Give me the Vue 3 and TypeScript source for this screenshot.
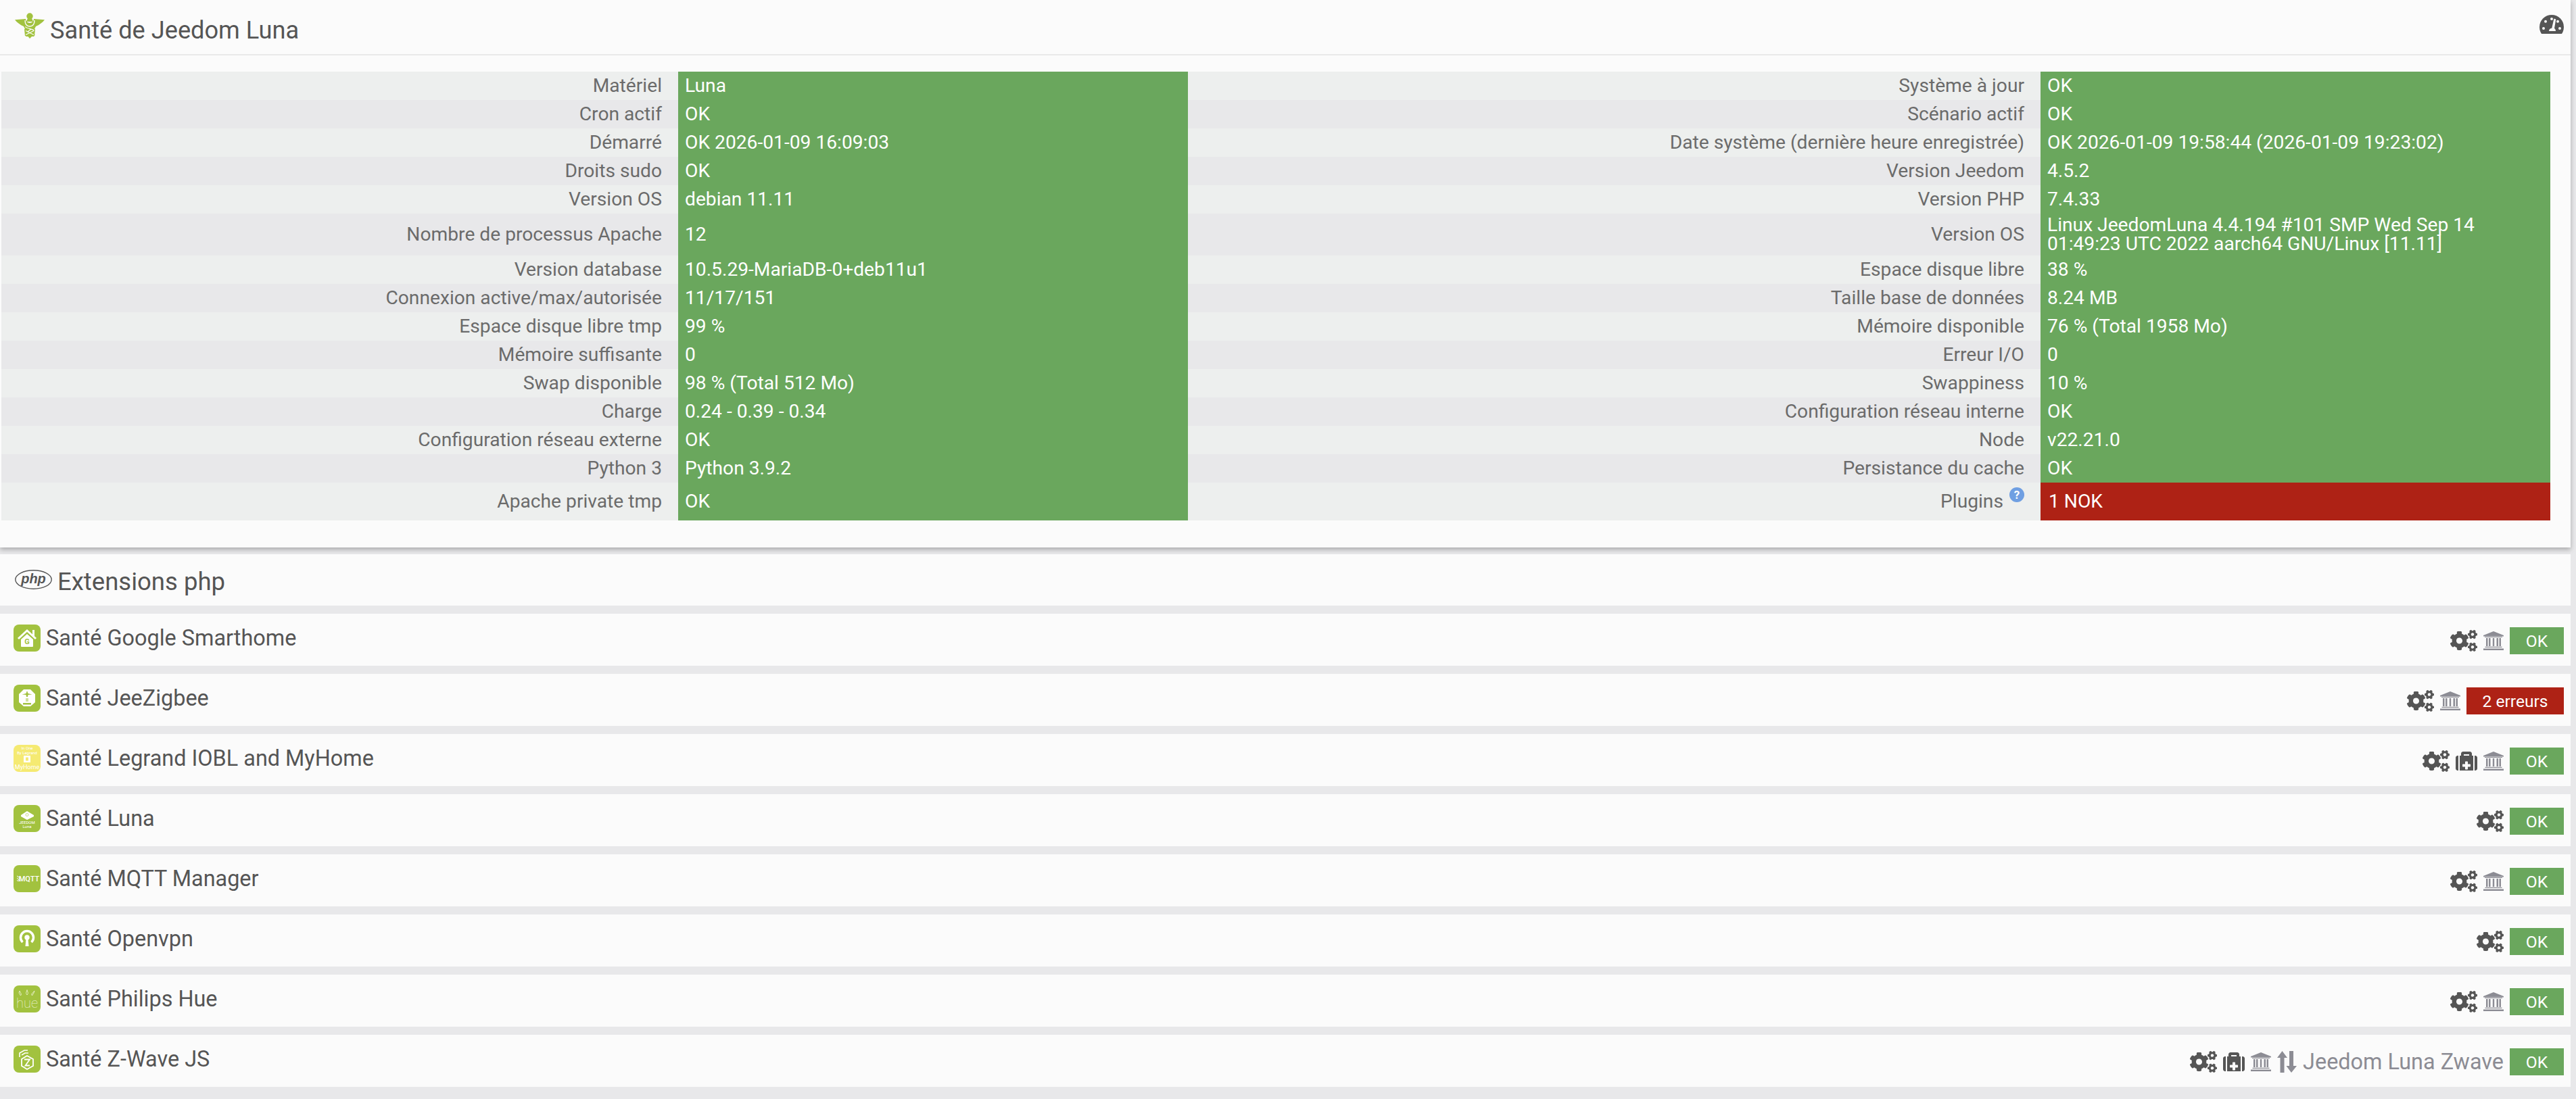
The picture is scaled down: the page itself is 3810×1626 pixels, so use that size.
<script setup lang="ts">
type Tool = 'gear' | 'med' | 'bank' | 'net'
type Logo = 'home' | 'zigbee' | 'legrand' | 'luna' | 'mqtt' | 'vpn' | 'hue' | 'zwave'

interface Cell { label: string; value: string; nok?: boolean; help?: boolean }
interface Row { left: Cell; right: Cell; size?: 'tall' | 'last' }
interface Plugin { name: string; logo: Logo; tools: Tool[]; net?: string; status: string; bad?: boolean }

const rows: Row[] = [
  { left: { label: 'Matériel', value: 'Luna' }, right: { label: 'Système à jour', value: 'OK' } },
  { left: { label: 'Cron actif', value: 'OK' }, right: { label: 'Scénario actif', value: 'OK' } },
  { left: { label: 'Démarré', value: 'OK 2026-01-09 16:09:03' }, right: { label: 'Date système (dernière heure enregistrée)', value: 'OK 2026-01-09 19:58:44 (2026-01-09 19:23:02)' } },
  { left: { label: 'Droits sudo', value: 'OK' }, right: { label: 'Version Jeedom', value: '4.5.2' } },
  { left: { label: 'Version OS', value: 'debian 11.11' }, right: { label: 'Version PHP', value: '7.4.33' } },
  { size: 'tall', left: { label: 'Nombre de processus Apache', value: '12' }, right: { label: 'Version OS', value: 'Linux JeedomLuna 4.4.194 #101 SMP Wed Sep 14 01:49:23 UTC 2022 aarch64 GNU/Linux [11.11]' } },
  { left: { label: 'Version database', value: '10.5.29-MariaDB-0+deb11u1' }, right: { label: 'Espace disque libre', value: '38 %' } },
  { left: { label: 'Connexion active/max/autorisée', value: '11/17/151' }, right: { label: 'Taille base de données', value: '8.24 MB' } },
  { left: { label: 'Espace disque libre tmp', value: '99 %' }, right: { label: 'Mémoire disponible', value: '76 % (Total 1958 Mo)' } },
  { left: { label: 'Mémoire suffisante', value: '0' }, right: { label: 'Erreur I/O', value: '0' } },
  { left: { label: 'Swap disponible', value: '98 % (Total 512 Mo)' }, right: { label: 'Swappiness', value: '10 %' } },
  { left: { label: 'Charge', value: '0.24 - 0.39 - 0.34' }, right: { label: 'Configuration réseau interne', value: 'OK' } },
  { left: { label: 'Configuration réseau externe', value: 'OK' }, right: { label: 'Node', value: 'v22.21.0' } },
  { left: { label: 'Python 3', value: 'Python 3.9.2' }, right: { label: 'Persistance du cache', value: 'OK' } },
  { size: 'last', left: { label: 'Apache private tmp', value: 'OK' }, right: { label: 'Plugins', value: '1 NOK', nok: true, help: true } },
]

const plugins: Plugin[] = [
  { name: 'Santé Google Smarthome', logo: 'home', tools: ['gear', 'bank'], status: 'OK' },
  { name: 'Santé JeeZigbee', logo: 'zigbee', tools: ['gear', 'bank'], status: '2 erreurs', bad: true },
  { name: 'Santé Legrand IOBL and MyHome', logo: 'legrand', tools: ['gear', 'med', 'bank'], status: 'OK' },
  { name: 'Santé Luna', logo: 'luna', tools: ['gear'], status: 'OK' },
  { name: 'Santé MQTT Manager', logo: 'mqtt', tools: ['gear', 'bank'], status: 'OK' },
  { name: 'Santé Openvpn', logo: 'vpn', tools: ['gear'], status: 'OK' },
  { name: 'Santé Philips Hue', logo: 'hue', tools: ['gear', 'bank'], status: 'OK' },
  { name: 'Santé Z-Wave JS', logo: 'zwave', tools: ['gear', 'med', 'bank', 'net'], net: 'Jeedom Luna Zwave', status: 'OK' },
]

const gearPath = 'M512.1 191l-8.2 14.3c-3 5.3-9.4 7.5-15.1 5.4-11.8-4.4-22.6-10.7-32.1-18.6-4.6-3.8-5.8-10.5-2.8-15.7l8.2-14.3c-6.9-8-12.3-17.3-15.9-27.4h-16.5c-6 0-11.2-4.3-12.2-10.3-2-12-2.1-24.6 0-37.1 1-6 6.2-10.4 12.2-10.4h16.5c3.6-10.1 9-19.4 15.9-27.4l-8.2-14.3c-3-5.2-1.9-11.9 2.8-15.7 9.5-7.9 20.4-14.2 32.1-18.6 5.7-2.1 12.1.1 15.1 5.4l8.2 14.3c10.5-1.9 21.2-1.9 31.7 0L552 6.3c3-5.3 9.4-7.5 15.1-5.4 11.8 4.4 22.6 10.7 32.1 18.6 4.6 3.8 5.8 10.5 2.8 15.7l-8.2 14.3c6.9 8 12.3 17.3 15.9 27.4h16.5c6 0 11.2 4.3 12.2 10.3 2 12 2.1 24.6 0 37.1-1 6-6.2 10.4-12.2 10.4h-16.5c-3.6 10.1-9 19.4-15.9 27.4l8.2 14.3c3 5.2 1.9 11.9-2.8 15.7-9.5 7.9-20.4 14.2-32.1 18.6-5.7 2.1-12.1-.1-15.1-5.4l-8.2-14.3c-10.4 1.9-21.2 1.9-31.7 0zm-10.5-58.8c38.5 29.6 82.4-14.3 52.8-52.8-38.5-29.7-82.4 14.3-52.8 52.8zM386.3 286.1l33.7 16.8c10.1 5.8 14.5 18.1 10.5 29.1-8.9 24.2-26.4 46.4-42.6 65.8-7.4 8.9-20.2 11.1-30.3 5.3l-29.1-16.8c-16 13.7-34.6 24.6-54.9 31.7v33.6c0 11.6-8.3 21.6-19.7 23.6-24.6 4.2-50.4 4.4-75.9 0-11.5-2-20-11.9-20-23.6V418c-20.3-7.2-38.9-18-54.9-31.7L74 403c-10 5.8-22.9 3.6-30.3-5.3-16.2-19.4-33.3-41.6-42.2-65.7-4-10.9.4-23.2 10.5-29.1l33.3-16.8c-3.9-20.9-3.9-42.4 0-63.4L12 205.8c-10.1-5.8-14.6-18.1-10.5-29 8.9-24.2 26-46.4 42.2-65.8 7.4-8.9 20.2-11.1 30.3-5.3l29.1 16.8c16-13.7 34.6-24.6 54.9-31.7V57.1c0-11.5 8.2-21.5 19.6-23.5 24.6-4.2 50.5-4.4 76-.1 11.5 2 20 11.9 20 23.6v33.6c20.3 7.2 38.9 18 54.9 31.7l29.1-16.8c10-5.8 22.9-3.6 30.3 5.3 16.2 19.4 33.2 41.6 42.1 65.8 4 10.9.1 23.2-10 29.1l-33.7 16.8c3.9 21 3.9 42.5 0 63.5zm-117.6 21.1c59.2-77-28.7-164.9-105.7-105.7-59.2 77 28.7 164.9 105.7 105.7zm243.4 182.7l-8.2 14.3c-3 5.3-9.4 7.5-15.1 5.4-11.8-4.4-22.6-10.7-32.1-18.6-4.6-3.8-5.8-10.5-2.8-15.7l8.2-14.3c-6.9-8-12.3-17.3-15.9-27.4h-16.5c-6 0-11.2-4.3-12.2-10.3-2-12-2.1-24.6 0-37.1 1-6 6.2-10.4 12.2-10.4h16.5c3.6-10.1 9-19.4 15.9-27.4l-8.2-14.3c-3-5.2-1.9-11.9 2.8-15.7 9.5-7.9 20.4-14.2 32.1-18.6 5.7-2.1 12.1.1 15.1 5.4l8.2 14.3c10.5-1.9 21.2-1.9 31.7 0l8.2-14.3c3-5.3 9.4-7.5 15.1-5.4 11.8 4.4 22.6 10.7 32.1 18.6 4.6 3.8 5.8 10.5 2.8 15.7l-8.2 14.3c6.9 8 12.3 17.3 15.9 27.4h16.5c6 0 11.2 4.3 12.2 10.3 2 12 2.1 24.6 0 37.1-1 6-6.2 10.4-12.2 10.4h-16.5c-3.6 10.1-9 19.4-15.9 27.4l8.2 14.3c3 5.2 1.9 11.9-2.8 15.7-9.5 7.9-20.4 14.2-32.1 18.6-5.7 2.1-12.1-.1-15.1-5.4l-8.2-14.3c-10.4 1.9-21.2 1.9-31.7 0zM501.6 431c38.5 29.6 82.4-14.3 52.8-52.8-38.5-29.6-82.4 14.3-52.8 52.8z'
const medPath = 'M96 480h320V128h-32V80c0-26.51-21.49-48-48-48H176c-26.51 0-48 21.49-48 48v48H96v352zm96-384h128v32H192V96zm160 248v32c0 8.837-7.163 16-16 16h-48v48c0 8.837-7.163 16-16 16h-32c-8.837 0-16-7.163-16-16v-48h-48c-8.837 0-16-7.163-16-16v-32c0-8.837 7.163-16 16-16h48v-48c0-8.837 7.163-16 16-16h32c8.837 0 16 7.163 16 16v48h48c8.837 0 16 7.163 16 16zM512 176v256c0 26.51-21.49 48-48 48h-16V128h16c26.51 0 48 21.49 48 48zM64 480H48c-26.51 0-48-21.49-48-48V176c0-26.51 21.49-48 48-48h16v352z'
</script>

<template>
  <div class="page">
    <section class="panel health">
      <header class="health-head">
        <div class="head-title">
          <svg class="caduceus" viewBox="0 0 44 38" aria-hidden="true">
            <circle cx="22" cy="5" r="4.700" fill="#a2c23f" />
            <path d="M19 8h6l2 5h-10z" fill="#a2c23f" />
            <path d="M0 10.300L16 9c0 3 3 6 6 6s6-3 6-6l16 1.300c-3 4-8 7.700-13 9.700l-2 4h-14l-2-4C8 18 3 14.300 0 10.300z" fill="#a2c23f" />
            <path d="M14 24h16l-1 10H15z" fill="#a2c23f" />
            <path d="M14.700 32h15l-1.500 3h-3.200L22 38l-2.500-3h-3z" fill="#a2c23f" />
            <path d="M15 11c0 6 3 9 7 9s7-3 7-9" fill="none" stroke="#fbfbfb" stroke-width="1.400" />
            <path d="M15.500 20.500c2 3 10 3 13 5.500M28 26.500l-12 6M16 26.500l12 6M24 24l-5 4" fill="none" stroke="#fbfbfb" stroke-width="1.300" />
          </svg>
          <span class="title head-text">Santé de Jeedom Luna</span>
        </div>
        <svg class="gauge" viewBox="0 0 36 28" aria-hidden="true">
          <circle cx="18" cy="18" r="18" fill="#555" />
          <g fill="#fafafa">
            <circle cx="9" cy="9.700" r="2" />
            <circle cx="18" cy="6" r="2" />
            <circle cx="27" cy="9.700" r="2" />
            <circle cx="6" cy="20" r="2" />
            <circle cx="30" cy="20" r="2" />
            <path d="M21.500 5.500l2.800 1-2.300 13.500c1.500.7 2 2.500 2 4h-10c0-2.500 1.800-4.300 4.200-4.300z" />
          </g>
        </svg>
      </header>

      <div class="table">
        <div v-for="(row, i) in rows" :key="i" class="row" :class="[row.size, i % 2 ? 'even' : 'odd']">
          <div class="label">{{ row.left.label }}</div>
          <div class="value">{{ row.left.value }}</div>
          <div class="label">
            {{ row.right.label }}
            <svg v-if="row.right.help" class="help" viewBox="0 0 22 22" aria-hidden="true">
              <circle cx="11" cy="11" r="11" fill="#6f9fe2" />
              <text x="11" y="17" text-anchor="middle" class="help-mark">?</text>
            </svg>
          </div>
          <div class="value" :class="{ nok: row.right.nok }">{{ row.right.value }}</div>
        </div>
      </div>
    </section>

    <section class="panel php">
      <svg class="php-logo" viewBox="0 0 55 29" aria-hidden="true">
        <ellipse cx="27.500" cy="14.500" rx="26.700" ry="13.700" fill="none" stroke="#555" stroke-width="1.400" />
        <text x="27.500" y="20" text-anchor="middle" class="php-mark">php</text>
      </svg>
      <span class="title php-text">Extensions php</span>
    </section>

    <section v-for="plugin in plugins" :key="plugin.name" class="panel plugin">
      <div class="plugin-name">
        <svg class="logo" viewBox="0 0 40 40" aria-hidden="true">
          <rect width="40" height="40" rx="8" :fill="plugin.logo === 'legrand' ? '#f5ea72' : '#a2c23f'" />
          <g v-if="plugin.logo === 'home'">
            <path d="M28 8h3v9h-3z" fill="#fff" />
            <path d="M7 21L20 9l13 12" fill="none" stroke="#fff" stroke-width="3" />
            <path d="M11 22l9-8 9 8v10a1 1 0 0 1-1 1H12a1 1 0 0 1-1-1z" fill="#fff" />
            <text x="20" y="29" text-anchor="middle" class="logo-g">G</text>
          </g>
          <g v-else-if="plugin.logo === 'zigbee'">
            <path d="M15 7h10l7 7v12l-7 6H15l-7-6V14z" fill="#fff" />
            <path d="M20 9l1.500 4 6 1.500-6 .5-.5 3h-2l-.5-3-6-.5 6-1.500z" fill="#a2c23f" />
            <path d="M18.500 20h1v5h-1zM20.500 20h1v5h-1zM14 27h12v2.500H14z" fill="#a2c23f" />
          </g>
          <g v-else-if="plugin.logo === 'legrand'">
            <text x="20" y="7" text-anchor="middle" class="logo-xs">In One</text>
            <text x="20" y="13.500" text-anchor="middle" class="logo-xs">By Legrand</text>
            <path d="M15 16h10v10H15z" fill="#fff" />
            <path d="M18 18.500h4v5h-4z" fill="#f5ea72" />
            <text x="20" y="35.500" text-anchor="middle" class="logo-my">MyHome</text>
          </g>
          <g v-else-if="plugin.logo === 'luna'">
            <path d="M20 9l10 6v2l-10 5-9-5v-2z" fill="#fff" />
            <circle cx="20" cy="14.500" r="2" fill="none" stroke="#a2c23f" stroke-width=".6" />
            <text x="20" y="28" text-anchor="middle" class="logo-xs">JEEDOM</text>
            <text x="20" y="34" text-anchor="middle" class="logo-xs">Luna</text>
          </g>
          <g v-else-if="plugin.logo === 'mqtt'">
            <path d="M5 16c3 1 5 4 5 8M5 19c2 .5 3 3 3 5M5 22c1 .3 1.500 1 1.500 2" fill="none" stroke="#fff" stroke-width="1" />
            <text x="23" y="23.500" text-anchor="middle" class="logo-mqtt">MQTT</text>
          </g>
          <g v-else-if="plugin.logo === 'vpn'">
            <path d="M13.500 25A9.500 9.500 0 1 1 26.500 25" fill="none" stroke="#fff" stroke-width="3.500" />
            <circle cx="20" cy="18" r="3.700" fill="#fff" />
            <path d="M18.500 20h3l1 11h-5z" fill="#fff" />
          </g>
          <g v-else-if="plugin.logo === 'hue'">
            <path d="M9 8l2.500 5-1 2-2.500-4zM20 6.500l1.500 5-1.500 2.500-1.500-2.500zM31 8l-1 3-2.500 4-1-2z" fill="none" stroke="#e8efc8" stroke-width=".9" />
            <text x="20" y="32.500" text-anchor="middle" class="logo-hue">hue</text>
          </g>
          <g v-else>
            <path d="M20 15l9 5v10l-9 5-8-5V20z" fill="none" stroke="#fff" stroke-width="1.800" />
            <path d="M9 17V11l7-4h5M12 14l5-3h5" fill="none" stroke="#fff" stroke-width="1.600" />
            <path d="M16 20.500h8l-6.500 9H24" fill="none" stroke="#fff" stroke-width="1.800" />
          </g>
        </svg>
        <span class="plugin-title">{{ plugin.name }}</span>
      </div>

      <div class="plugin-tools">
        <template v-for="tool in plugin.tools" :key="tool">
          <svg v-if="tool === 'gear'" class="tool tool-gear" viewBox="0 0 640 512" aria-hidden="true">
            <path :d="gearPath" />
          </svg>
          <svg v-else-if="tool === 'med'" class="tool tool-med" viewBox="0 32 512 448" aria-hidden="true">
            <path :d="medPath" />
          </svg>
          <svg v-else-if="tool === 'bank'" class="tool tool-bank" viewBox="0 0 30 28" aria-hidden="true">
            <path d="M15 0l15 6v1.500H0V6zM2 8h26v1H2z" />
            <path d="M4 10h2.500v12H4zM8 10h2.500v12H8zM13.800 10h2.400v12h-2.400zM19.500 10H22v12h-2.500zM23.500 10H26v12h-2.500zM2.500 22.800h25V24h-25zM0 25.500h30V28H0z" />
          </svg>
          <template v-else>
            <svg class="tool tool-net" viewBox="0 0 29 32" aria-hidden="true">
              <path d="M7.500 0L15 10h-4.500v22H4.500V10H0zM18 0h6v22h5l-8 10-7.500-10H18z" />
            </svg>
            <span class="net-name">{{ plugin.net }}</span>
          </template>
        </template>
        <span class="badge" :class="{ bad: plugin.bad }">{{ plugin.status }}</span>
      </div>
    </section>
  </div>
</template>

<style scoped>
.page {
  box-sizing: border-box;
  width: 3810px;
  height: 1626px;
  padding-right: 8px;
  overflow: hidden;
  background: #e8e8ea;
  font-family: Roboto, "Liberation Sans", sans-serif;
  color: #555;
}

.panel {
  background: #fbfbfb;
}

.health {
  height: 810px;
  box-shadow: 0 3px 7px rgba(0, 0, 0, 0.28);
  margin-bottom: 10px;
}

.health-head {
  box-sizing: border-box;
  height: 82px;
  padding: 19px 10px 0 22px;
  display: flex;
  justify-content: space-between;
  align-items: flex-start;
  border-bottom: 2px solid #e9e9e9;
}

.head-title {
  display: flex;
  align-items: flex-start;
  gap: 8px;
}

.caduceus {
  width: 44px;
  height: 38px;
  flex: none;
}

.title {
  font-size: 36.2px;
  line-height: 42px;
}

.head-text {
  margin-top: 5px;
}

.gauge {
  width: 36px;
  height: 28px;
  margin-top: 3px;
}

.table {
  margin: 24px 30px 0 2px;
  font-size: 28.2px;
  line-height: 28px;
}

.row {
  display: grid;
  grid-template-columns: 1001px 754px 1261px 754px;
  height: 42px;
}

.row.tall {
  height: 62px;
}

.row.last {
  height: 56px;
}

.row.odd {
  background: #edefee;
}

.row.even {
  background: #e8e8ea;
}

.label {
  display: flex;
  align-items: center;
  justify-content: flex-end;
  gap: 9px;
  padding-right: 24px;
  color: #6b6b6b;
}

.help {
  width: 22px;
  height: 22px;
  margin-top: -20px;
  flex: none;
}

.help-mark {
  font-size: 17px;
  font-weight: 700;
  fill: #fff;
}

.value {
  display: flex;
  align-items: center;
  padding: 0 10px;
  background: #6aa75d;
  color: #fff;
}

.value.nok {
  background: #ae2215;
  padding-left: 12px;
}

.php {
  box-sizing: border-box;
  height: 76px;
  margin-bottom: 12px;
  padding: 23px 0 0 22px;
  display: flex;
  align-items: flex-start;
  gap: 8px;
}

.php-text {
  margin-top: -3px;
  font-size: 36.5px;
}

.php-logo {
  width: 55px;
  height: 29px;
  flex: none;
}

.php-mark {
  font-family: "Liberation Sans", sans-serif;
  font-size: 20px;
  font-weight: 700;
  font-style: italic;
  fill: #555;
}

.plugin {
  box-sizing: border-box;
  height: 77px;
  margin-bottom: 12px;
  padding: 16px 10px 0 20px;
  display: flex;
  justify-content: space-between;
  align-items: flex-start;
}

.plugin-name {
  display: flex;
  align-items: center;
  gap: 8px;
}

.logo {
  width: 40px;
  height: 40px;
  flex: none;
}

.plugin-title {
  font-size: 32.4px;
  line-height: 40px;
}

.plugin-tools {
  display: flex;
  align-items: center;
  gap: 9px;
  height: 40px;
  margin-top: 4px;
}

.tool {
  flex: none;
  fill: #555;
}

.tool-gear {
  width: 40px;
  height: 32px;
}

.tool-med {
  width: 32px;
  height: 28px;
}

.tool-bank {
  width: 30px;
  height: 28px;
  fill: #8c8c94;
}

.tool-net {
  width: 29px;
  height: 32px;
  fill: #8c8c94;
}

.net-name {
  font-size: 32.4px;
  line-height: 40px;
  color: #8c8c94;
}

.badge {
  box-sizing: border-box;
  width: 80px;
  height: 40px;
  display: flex;
  align-items: center;
  justify-content: center;
  background: #6aa75d;
  color: #fff;
  font-size: 24.6px;
}

.badge.bad {
  width: 144px;
  background: #ae2215;
}

.logo-g {
  font-size: 11px;
  font-weight: 700;
  fill: #a2c23f;
}

.logo-xs {
  font-size: 6px;
  fill: #fff;
}

.logo-my {
  font-size: 9px;
  fill: #fff;
}

.logo-mqtt {
  font-size: 11px;
  font-weight: 500;
  fill: #fff;
}

.logo-hue {
  font-size: 20px;
  font-weight: 100;
  fill: #eef3d6;
}
</style>

<style>
html,
body {
  margin: 0;
  background: #e8e8ea;
}
</style>
